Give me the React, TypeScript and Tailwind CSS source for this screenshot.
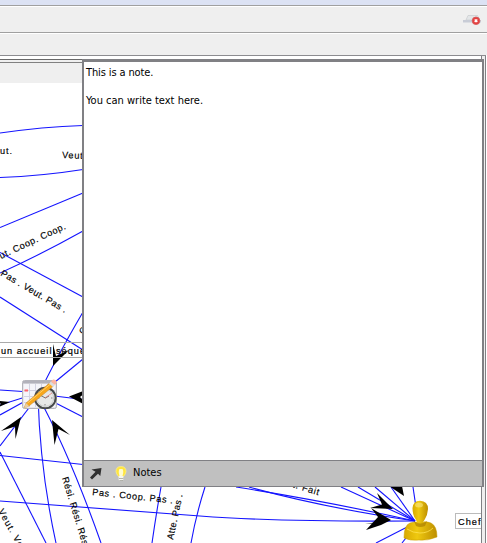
const edges = [
  'M0 133 Q42 127 83 125.5',
  'M0 177.5 Q42 176 83 169.5',
  'M0 227.5 Q40 211 83 193',
  'M0 273 Q40 255 83 231',
  'M0 252.5 L83 297',
  'M0 297 L83 350',
  'M83 312 Q55 360 38 396',
  'M83 359 L38 396',
  'M0 390 L38 392.5',
  'M0 405 L38 393',
  'M0 415 L38 394',
  'M38 394 L83 399.5',
  'M38 394 L83 417',
  'M0 446 L38 396',
  'M38 396 Q40 470 56 543',
  'M38 396 Q70 455 101 543',
  'M0 452 L46 543',
  'M0 455.5 L83 464.5',
  'M0 501 Q120 510 200 516 T415 521',
  'M161 487 Q156 515 152 543',
  'M205 487 Q196 515 191 543',
  'M236 487 Q330 502 415 521',
  'M249 487 Q320 507 415 521',
  'M341 487 L415 521',
  'M358 487 L415 521',
  'M375 487 L415 521',
  'M391 487 L415 521',
  'M413 487 L418 521',
  'M376 543 L415 523',
  'M402 543 L416 525',
];

const arrowHeads = [
  'M53 366 L53 344 L56 356 L69 350 Z',
  'M10 402 L-4 400.5 L1 404 L-6 409 Z',
  'M69 396.5 L91 388 L80 397 L91 408 Z',
  'M21 417 L1 431 L15 426.5 L15.5 439 Z',
  'M52 420 L54.5 445 L58.5 429 L70 435 Z',
  'M389 486 L402 486 L404 496 Z',
  'M393 509 L377 493 L382 504.5 L370 508 Z',
  'M391 520 L371 508 L378 517 L366 530 L381 525 Z',
  'M391 520 L365 524 L381 523 Z',
];

const labels = [
  { text: 'ut.', x: 0, y: 154, angle: 0, width: 12 },
  { text: 'Veut.', x: 62, y: 158, angle: 2, width: 24 },
  { text: 'ut. Coop. Coop.', x: 1, y: 259, angle: -25, width: 72 },
  { text: 'Pas . Veut. Pas .', x: 0, y: 275, angle: 30.5, width: 75 },
  { text: 'Pas . Coop. Pas .', x: 92, y: 495, angle: 6, width: 81 },
  { text: 'Rési. Rési. Rési.', x: 62, y: 478, angle: 73, width: 76 },
  { text: 'Veut. Veut.', x: -2, y: 511, angle: 61, width: 56 },
  { text: 'Atte. Pas .', x: 173, y: 540, angle: -78, width: 46 },
  { text: 'Fait. Fait', x: 278, y: 483, angle: 17, width: 42 },
  { text: 'Coop.', x: 84, y: 335, angle: -60, width: 26 },
];

function TaskIcon() {
  return (
    <g>
      <rect x="22.5" y="380.5" width="34" height="28" rx="2" fill="#e6e6eb" stroke="#b4b4bb" />
      <path d="M23 381 H56 V383.5 H23 Z" fill="#b2b2bb" />
      <path d="M24 384 H55 V407 H24 Z" fill="#f5f5fa" />
      <path d="M29.5 384 V407 M35.5 384 V407 M41.5 384 V407 M47.5 384 V407 M24 390.5 H55 M24 396.5 H55 M24 402.5 H55" stroke="#d3d3e2" />
      <path d="M24.5 390.5 H28" stroke="#ff6068" strokeWidth="2" />
      <circle cx="45.3" cy="398" r="10.3" fill="#e9e9e9" stroke="#46494a" strokeWidth="2" />
      <circle cx="45.3" cy="398" r="8.4" fill="#e7e8e7" stroke="#cacccb" />
      <path d="M40 395 L45.3 398 L49 396" stroke="#555" fill="none" strokeWidth=".8" />
      <path d="M45 398 L52 393" stroke="#e47470" strokeWidth=".7" />
      <path d="M45 391 V392 M45 404 V405.5 M38 398 H39.5 M51 398 H52.5" stroke="#888" />
      <path d="M26 403 L49.5 383 L53 386.5 L29 406 L24 408 Z" fill="#f8a71c" stroke="#b87920" strokeWidth=".4" />
      <path d="M27.5 403 L50.5 384" stroke="#ffd268" />
      <path d="M49 383.5 L51 381.5 L55 385 L53 387 Z" fill="#ddd" />
      <path d="M51 381.5 L53 379.5 Q56 379 56.5 382.5 L55 385 Z" fill="#ffb5a0" />
      <path d="M26 403 L29 406 L24 408.5 Z" fill="#ead0a2" />
    </g>
  );
}

function ChiefIcon() {
  return (
    <g>
      <path d="M404 538 Q404 525 410 523 Q414 521.5 420 522 Q427 521 431 523 Q437 526 437 537 Q428 541 419 540 Q410 541 404 538 Z" fill="url(#gold)" stroke="#c79b00" strokeWidth=".5" />
      <path d="M407 529 Q413 533 420 533 Q428 533 433 528" fill="none" stroke="#ffe250" strokeWidth=".8" />
      <path d="M414 521 Q420 526 427 521 L425 526 Q420 528 416 526 Z" fill="#a87b00" opacity=".65" />
      <path d="M420 500.7 Q428 501 428 509 Q427.5 515 425 519 Q423 523 420 523 Q417 523 415.5 519 Q412.5 515 412.5 508 Q413 501 420 500.7 Z" fill="url(#gold)" />
      <ellipse cx="419" cy="505" rx="4" ry="2.5" fill="#ffef9a" opacity=".5" />
    </g>
  );
}

function Diagram() {
  return (
    <svg className="block h-[460px] w-[481px]" viewBox="0 83 481 460" fontFamily="'Liberation Sans', Arial, sans-serif" fontSize="9.2">
      <defs>
        <linearGradient id="gold">
          <stop stopColor="#d7a900" />
          <stop offset=".4" stopColor="#efc910" />
          <stop offset="1" stopColor="#bd8e00" />
        </linearGradient>
      </defs>
      <g fill="none" stroke="#1414ff" strokeWidth="1.1">
        {edges.map((d) => <path key={d} d={d} />)}
      </g>
      {arrowHeads.map((d) => <path key={d} d={d} />)}
      {labels.map((l) => (
        <text key={l.text + l.x} x={l.x} y={l.y} textLength={l.width} stroke="#000" strokeWidth=".15" transform={`rotate(${l.angle} ${l.x} ${l.y})`}>{l.text}</text>
      ))}
      <path d="M0 342.5 H83 M0 357.5 H83" fill="none" stroke="#aaa" />
      <text x="1" y="354" textLength="106" stroke="#000" strokeWidth=".2">un accueil séquentiel</text>
      <TaskIcon />
      <ChiefIcon />
      <rect x="455.5" y="513.5" width="40" height="15" fill="#fff" stroke="#bbb" />
      <text x="458" y="525" textLength="22.5" stroke="#000" strokeWidth=".2">Chef</text>
    </svg>
  );
}

function NotePanel() {
  return (
    <section className="absolute left-[82px] top-[59px] flex h-[428px] w-[402px] flex-col border-2 border-t-[3px] border-b border-[#808084] bg-white">
      <div className="grow whitespace-pre pl-[2px] pt-[4px] text-[11px] leading-[14px]">
        <p className="tracking-[-0.12px]">This is a note.</p>
        <p className="mt-[14px]">You can write text here.</p>
      </div>
      <footer className="flex h-[26px] shrink-0 items-center border-t border-[#808084] bg-[#c0c0c0] pl-[5px]">
        <svg width="14" height="14" viewBox="0 0 14 14">
          <path d="M2.5 2.5 L12.5 1 L11.3 9 L9 6.8 L3 12.5 L1 10.5 L6.5 4.8 Z" fill="#303030" />
        </svg>
        <svg className="ml-[10px]" width="16" height="18" viewBox="0 0 16 18">
          <path d="M8 1.5 Q13 1.5 13 6.5 Q13 8.5 10.5 11.5 H5.5 Q3 8.5 3 6.5 Q3 1.5 8 1.5" fill="#ffe53e" stroke="#fff08a" strokeWidth=".7" />
          <path d="M6.5 4 Q5 6 6.5 11 H9.5 Q11 6 9.5 4 Z" fill="#fffbd0" />
          <path d="M5.7 11 H10.3 V15 L9 16 H7 L5.7 15 Z" fill="#f5f5ee" />
          <path d="M6 13.5 H10.3 M6.5 15.5 H10" stroke="#96968e" strokeWidth=".7" />
        </svg>
        <span className="ml-[4px] text-[11px]">Notes</span>
      </footer>
    </section>
  );
}

export default function App() {
  return (
    <main className="relative flex h-[543px] w-[487px] flex-col overflow-hidden bg-white font-['DejaVu_Sans_Condensed','DejaVu_Sans',sans-serif] text-black">
      <div className="h-[5px] shrink-0 bg-[#dce2f4]" />
      <header className="flex h-[28px] shrink-0 justify-end border-y border-[#a0a0a0] bg-[#efefef] pr-[5px] pt-2 shadow-[inset_0_1px_white]">
        <svg width="19" height="13" viewBox="0 0 19 13">
          <path d="M5 1.5 H14.5 L16.5 6 H3 Z" fill="#e3e6e8" stroke="#c8cccf" strokeWidth=".7" />
          <path d="M0 6 H18 V8.5 H0 Z" fill="#c8ccd6" />
          <circle cx="13" cy="6.8" r="3.8" fill="#e64040" stroke="#d35a5a" strokeWidth=".8" />
          <path d="M11.7 5.5 L14.3 8.1 M14.3 5.5 L11.7 8.1" stroke="#fff" strokeWidth="1.4" />
        </svg>
      </header>
      <div className="h-[22px] shrink-0 bg-[#efefef] shadow-[inset_0_1px_white]" />
      <div className="flex w-[486px] grow border-t border-[#8c8c90]">
        <div className="w-[482px] border-r border-[#808084]">
          <div className="h-[3px]" />
          <div className="h-[3px] border-t border-[#686868] bg-[#efefef]" />
          <div className="h-[21px] border-t border-[#808080] bg-[#efefef]" />
          <Diagram />
        </div>
        <div className="w-[4px] border-r border-[#808084] bg-[#efefef]" />
      </div>
      <NotePanel />
    </main>
  );
}
